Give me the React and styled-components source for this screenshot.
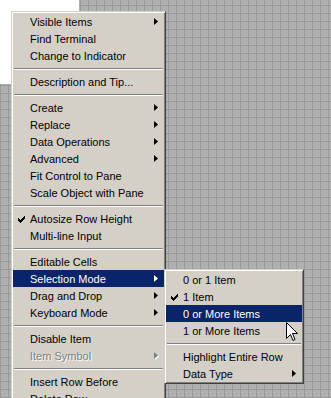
import React from 'react';
import styled, { createGlobalStyle } from 'styled-components';

const GlobalStyle = createGlobalStyle`
  html, body {
    margin: 0;
    padding: 0;
  }
  body {
    font-family: "Liberation Sans", Arial, sans-serif;
    font-size: 11px;
    overflow: hidden;
  }
`;

const Desktop = styled.div`
  position: relative;
  width: 331px;
  height: 398px;
  overflow: hidden;
  background-color: #b0b0b0;
  background-image:
    linear-gradient(to right, #989898 1px, transparent 1px),
    linear-gradient(to bottom, #989898 1px, transparent 1px);
  background-size: 8px 8px;
  background-position: 0 5px;
`;

const Blank = styled.div`
  width: 79px;
  height: 84px;
  background: #fff;
`;

const Menu = styled.div`
  position: absolute;
  left: ${(p) => p.x}px;
  top: ${(p) => p.y}px;
  width: ${(p) => p.w}px;
  box-sizing: border-box;
  display: flex;
  flex-direction: column;
  padding: 1px;
  background: #d4d0c8;
  border: 1px solid;
  border-color: #d4d0c8 #404040 #404040 #d4d0c8;
  box-shadow: inset 1px 1px 0 #fff, inset -1px -1px 0 #808080;
`;

const Item = styled.div`
  position: relative;
  height: 17px;
  display: flex;
  align-items: center;
  padding-left: 17px;
  padding-right: 6px;
  white-space: nowrap;
  color: ${(p) => (p.active ? '#fff' : p.disabled ? '#808080' : '#000')};
  background: ${(p) => (p.active ? '#0a246a' : 'transparent')};
  text-shadow: ${(p) => (p.disabled ? '1px 1px 0 #fff' : 'none')};
`;

const Label = styled.span`
  flex: 1;
  padding-top: 1px;
`;

const Check = styled.svg`
  position: absolute;
  left: 5px;
  top: 6px;
`;

const Arrow = styled.svg`
  flex: none;
  filter: ${(p) => (p.disabled ? 'drop-shadow(1px 1px 0 #fff)' : 'none')};
`;

const Separator = styled.div`
  height: 9px;
  display: flex;
  align-items: center;
  padding: 0 1px;

  &::before {
    content: '';
    flex: 1;
    height: 0;
    border-top: 1px solid #808080;
    border-bottom: 1px solid #fff;
  }
`;

const Cursor = styled.svg`
  position: absolute;
  left: 286px;
  top: 322px;
`;

const mainItems = [
  { label: 'Visible Items', sub: true },
  { label: 'Find Terminal' },
  { label: 'Change to Indicator' },
  '-',
  { label: 'Description and Tip...' },
  '-',
  { label: 'Create', sub: true },
  { label: 'Replace', sub: true },
  { label: 'Data Operations', sub: true },
  { label: 'Advanced', sub: true },
  { label: 'Fit Control to Pane' },
  { label: 'Scale Object with Pane' },
  '-',
  { label: 'Autosize Row Height', checked: true },
  { label: 'Multi-line Input' },
  '-',
  { label: 'Editable Cells' },
  { label: 'Selection Mode', sub: true, active: true },
  { label: 'Drag and Drop', sub: true },
  { label: 'Keyboard Mode', sub: true },
  '-',
  { label: 'Disable Item' },
  { label: 'Item Symbol', sub: true, disabled: true },
  '-',
  { label: 'Insert Row Before' },
  { label: 'Delete Row' },
];

const subItems = [
  { label: '0 or 1 Item' },
  { label: '1 Item', checked: true },
  { label: '0 or More Items', active: true },
  { label: '1 or More Items' },
  '-',
  { label: 'Highlight Entire Row' },
  { label: 'Data Type', sub: true },
];

const MenuList = ({ items, ...rest }) => (
  <Menu {...rest}>
    {items.map((it, i) => {
      if (it === '-') return <Separator key={i} />;
      const color = it.active ? '#fff' : it.disabled ? '#808080' : '#000';
      return (
        <Item key={i} active={it.active} disabled={it.disabled}>
          {it.checked && (
            <Check width="7" height="7" viewBox="0 0 7 7">
              <path d="M0 2h1v1h1v1h1V3h1V2h1V1h1V0h1v3H6v1H5v1H4v1H3v1H2V6H1V5H0z" fill={color} />
            </Check>
          )}
          <Label>{it.label}</Label>
          {it.sub && (
            <Arrow width="4" height="7" viewBox="0 0 4 7" disabled={it.disabled}>
              <path d="M0 0L4 3.5L0 7Z" fill={color} />
            </Arrow>
          )}
        </Item>
      );
    })}
  </Menu>
);

export default function App() {
  return (
    <>
      <GlobalStyle />
      <Desktop>
        <Blank />
        <MenuList items={mainItems} x={11} y={11} w={155} />
        <MenuList items={subItems} x={164} y={269} w={140} />
        <Cursor width="12" height="20" viewBox="0 0 12 20">
          <path
            d="M0.5 0.5V16.5L4.5 12.5L7 18.5L9 17.5L6.5 11.5H11.5Z"
            fill="#fff"
            stroke="#000"
            strokeWidth="1"
          />
        </Cursor>
      </Desktop>
    </>
  );
}
